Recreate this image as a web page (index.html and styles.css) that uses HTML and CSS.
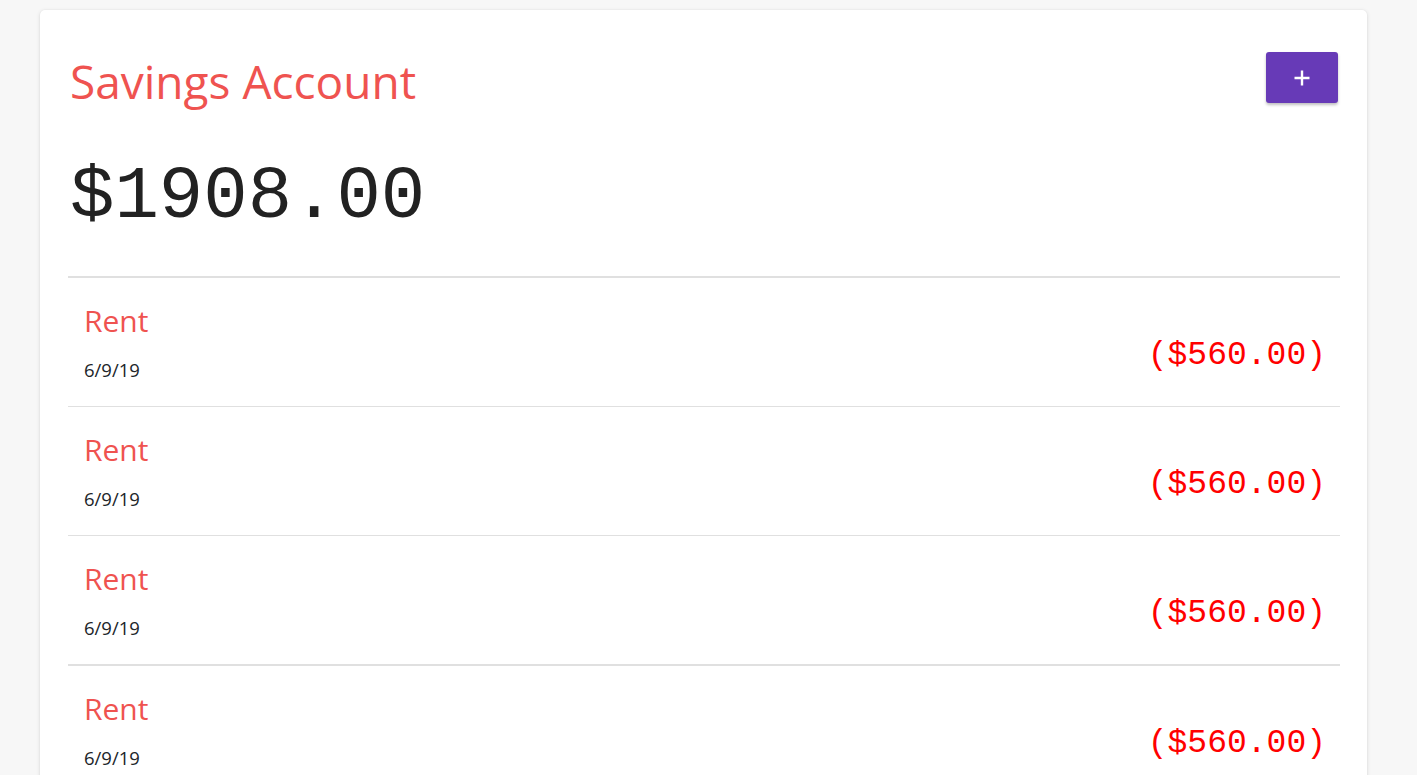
FILE: index.html
```
<!DOCTYPE html>
<html lang="en">
<head>
<meta charset="utf-8">
<title>Savings Account</title>
<link rel="stylesheet" href="styles.css">
</head>
<body>
<main class="card">
  <header class="card-header">
    <h1 class="account-name">Savings Account</h1>
    <button class="add-btn" type="button" aria-label="Add transaction">
      <svg width="20" height="20" viewBox="0 0 20 20" aria-hidden="true"><path d="M10 2.5v15M2.5 10h15" stroke="#fff" stroke-width="2.4" fill="none"/></svg>
    </button>
  </header>
  <div class="balance">$1908.00</div>
  <ul class="transactions">
    <li class="txn">
      <div class="txn-info"><div class="txn-name">Rent</div><div class="txn-date">6/9/19</div></div>
      <div class="txn-amount">($560.00)</div>
    </li>
    <li class="txn">
      <div class="txn-info"><div class="txn-name">Rent</div><div class="txn-date">6/9/19</div></div>
      <div class="txn-amount">($560.00)</div>
    </li>
    <li class="txn">
      <div class="txn-info"><div class="txn-name">Rent</div><div class="txn-date">6/9/19</div></div>
      <div class="txn-amount">($560.00)</div>
    </li>
    <li class="txn">
      <div class="txn-info"><div class="txn-name">Rent</div><div class="txn-date">6/9/19</div></div>
      <div class="txn-amount">($560.00)</div>
    </li>
  </ul>
</main>
</body>
</html>
```
FILE: styles.css
```
html, body {
  margin: 0;
  padding: 0;
}
body {
  background: #f7f7f7;
  font-family: "Open Sans", "Noto Sans", sans-serif;
  overflow: hidden;
  height: 775px;
}
.card {
  margin: 10px 50px 0 40px;
  background: #fff;
  border-radius: 5px;
  box-shadow: 0 1px 4px rgba(0,0,0,0.12), 0 0 2px rgba(0,0,0,0.06);
  padding: 28px 27px 28px 28px;
}
.card-header {
  display: flex;
  justify-content: space-between;
  align-items: flex-start;
  padding: 14px 2px 0 2px;
}
.account-name {
  margin: 0;
  padding-top: 3px;
  font-weight: 400;
  font-size: 46px;
  line-height: 52px;
  color: #ef5350;
}
.add-btn {
  width: 72px;
  height: 51px;
  border: none;
  border-radius: 3px;
  background: #673ab7;
  box-shadow: 0 2px 3px rgba(0,0,0,0.25);
  display: flex;
  align-items: center;
  justify-content: center;
  padding: 0;
}
.balance {
  font-family: "Liberation Mono", "DejaVu Sans Mono", monospace;
  font-size: 74px;
  line-height: 90px;
  color: #222;
  padding: 45px 0 34px 2px;
}
.transactions {
  list-style: none;
  margin: 0;
  padding: 0;
  border-top: 2px solid #e0e0e0;
}
.txn {
  display: flex;
  justify-content: space-between;
  align-items: center;
  padding: 14px 14px 14px 16px;
  border-bottom: 1px solid #e0e0e0;
  height: 100px;
}
.txn:nth-child(3) {
  border-bottom-width: 2px;
}
.txn-name {
  font-size: 30px;
  line-height: 44px;
  color: #ef5350;
}
.txn-date {
  font-size: 18.5px;
  line-height: 30px;
  color: #212529;
  margin-top: 12px;
}
.txn-amount {
  font-family: "Liberation Mono", "DejaVu Sans Mono", monospace;
  font-size: 33px;
  color: #ff0000;
  padding-top: 26px;
}
```
